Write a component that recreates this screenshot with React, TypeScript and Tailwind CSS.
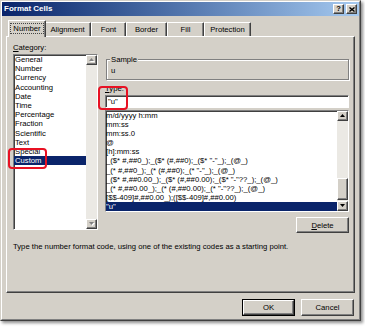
import React from "react";

const raised =
  "bg-[#d4d0c8] border border-t-white border-l-white border-r-[#404040] border-b-[#404040] shadow-[inset_-1px_-1px_0_#808080]";
const sunken =
  "border border-t-[#808080] border-l-[#808080] border-r-white border-b-white shadow-[inset_1px_1px_0_#404040]";

function Arrow({ dir, disabled }: { dir: "up" | "down"; disabled?: boolean }) {
  const pts = dir === "up" ? "2.5,0 5,3 0,3" : "0,0 5,0 2.5,3";
  const sh = dir === "up" ? "3.5,1 6,4 1,4" : "1,1 6,1 3.5,4";
  return (
    <svg width="6" height="4" viewBox="0 0 6 4">
      {disabled && <polygon points={sh} fill="#ffffff" />}
      <polygon points={pts} fill={disabled ? "#808080" : "#000000"} />
    </svg>
  );
}

function ScrollBtn({ dir, disabled }: { dir: "up" | "down"; disabled?: boolean }) {
  return (
    <div className={`${raised} h-[10px] flex items-center justify-center`}>
      <Arrow dir={dir} disabled={disabled} />
    </div>
  );
}

const cats = [
  "General",
  "Number",
  "Currency",
  "Accounting",
  "Date",
  "Time",
  "Percentage",
  "Fraction",
  "Scientific",
  "Text",
  "Special",
  "Custom",
];

const codes = [
  "m/d/yyyy h:mm",
  "mm:ss",
  "mm:ss.0",
  "@",
  "[h]:mm:ss",
  '_($* #,##0_);_($* (#,##0);_($* "-"_);_(@_)',
  '_(* #,##0_);_(* (#,##0);_(* "-"_);_(@_)',
  '_($* #,##0.00_);_($* (#,##0.00);_($* "-"??_);_(@_)',
  '_(* #,##0.00_);_(* (#,##0.00);_(* "-"??_);_(@_)',
  "[$$-409]#,##0.00_);([$$-409]#,##0.00)",
  '"u"',
];

const tabs = [
  { label: "Alignment", w: "w-[47px]" },
  { label: "Font", w: "w-[35px]" },
  { label: "Border", w: "w-[41px]" },
  { label: "Fill", w: "w-[37px]" },
  { label: "Protection", w: "w-[47px]" },
];

export default function App() {
  return (
    <div className="relative w-[365px] h-[327px] bg-white overflow-hidden font-['Liberation_Sans',Arial,sans-serif] text-[7.7px] text-black">
      {/* window */}
      <div className="w-[361px] h-[321px] border border-t-[#d4d0c8] border-l-[#d4d0c8] border-r-[#404040] border-b-[#404040] shadow-[2px_2px_3px_rgba(0,0,0,0.45)]">
        <div className="h-full border border-t-white border-l-white border-r-[#808080] border-b-[#808080] bg-[#d4d0c8] flex flex-col">
          {/* title bar */}
          <div className="h-[14px] shrink-0 flex items-center justify-between pl-[2px] pr-[2px] bg-gradient-to-r from-[#0a246a] to-[#a6caf0]">
            <span className="text-white font-bold text-[8px] leading-[10px]">Format Cells</span>
            <div className="flex gap-[2px]">
              <div className={`${raised} w-[11px] h-[10px] flex items-center justify-center font-bold text-[7.5px] leading-[8px]`}>
                ?
              </div>
              <div className={`${raised} w-[11px] h-[10px] flex items-center justify-center`}>
                <svg width="6" height="5" viewBox="0 0 6 5">
                  <path d="M0.5 0.5 L5.5 4.5 M5.5 0.5 L0.5 4.5" stroke="#000" strokeWidth="1.4" />
                </svg>
              </div>
            </div>
          </div>

          {/* body */}
          <div className="flex-1 flex flex-col pl-[4px] pr-[4px] mt-[4px]">
            {/* tabs */}
            <div className="h-[16px] flex items-end pl-[4px]">
              <div className="relative z-10 -ml-[2px] -mr-[2px] -mb-px w-[38px] h-[17px] bg-[#d4d0c8] border-t border-l border-t-white border-l-white border-r border-r-[#404040] shadow-[inset_-1px_0_0_#808080] rounded-t-[1px] flex items-start justify-center pt-[2px]">
                <span className="border border-dotted border-[#444] px-[2px] leading-[9px]">Number</span>
              </div>
              {tabs.map((t) => (
                <div
                  key={t.label}
                  className={`${t.w} h-[14px] bg-[#d4d0c8] border-t border-l border-t-white border-l-white border-r border-r-[#404040] shadow-[inset_-1px_0_0_#808080] rounded-t-[1px] flex items-start justify-center pt-[2px] leading-[9px]`}
                >
                  {t.label}
                </div>
              ))}
            </div>

            {/* panel */}
            <div className="h-[257px] shrink-0 border border-t-white border-l-white border-r-[#404040] border-b-[#404040] shadow-[inset_-1px_-1px_0_#808080] pt-[6px] pl-[6px] pr-[5px] flex flex-col">
              <div className="flex gap-[7px] items-start">
                {/* left column */}
                <div className="w-[85px] flex flex-col">
                  <div className="h-[9px] leading-[9px]">
                    <span className="underline">C</span>ategory:
                  </div>
                  <div className={`${sunken} mt-[2px] h-[176px] bg-white flex overflow-hidden`}>
                    <div className="flex-1 flex flex-col min-w-0">
                      {cats.map((c) => (
                        <div
                          key={c}
                          className={
                            c === "Custom"
                              ? "h-[9.2px] leading-[9.2px] pl-[1px] bg-[#0a246a] text-white whitespace-nowrap"
                              : "h-[9.2px] leading-[9.2px] pl-[1px] whitespace-nowrap"
                          }
                        >
                          {c}
                        </div>
                      ))}
                    </div>
                    <div className="w-[11px] flex flex-col bg-[#ebe9e4]">
                      <ScrollBtn dir="up" disabled />
                      <div className="flex-1" />
                      <ScrollBtn dir="down" disabled />
                    </div>
                  </div>
                </div>

                {/* right column */}
                <div className="flex-1 flex flex-col">
                  <div className="relative ml-[1px] mt-[16px] h-[21px] border border-[#808080] shadow-[inset_1px_1px_0_#fff,1px_1px_0_#fff]">
                    <span className="absolute left-[3px] top-[-5px] px-[1px] bg-[#d4d0c8] leading-[9px]">Sample</span>
                    <div className="pl-[4px] pt-[6px] leading-[9px]">u</div>
                  </div>
                  <div className="mt-[4px] h-[9px] leading-[9px]">
                    <span className="underline">T</span>ype:
                  </div>
                  <div className={`${sunken} mt-[2px] h-[13px] bg-white flex items-center pl-[2px] leading-[9px]`}>
                    "u"
                  </div>
                  <div className={`${sunken} mt-[2px] h-[102px] bg-white flex overflow-hidden`}>
                    <div className="flex-1 flex flex-col min-w-0">
                      {codes.map((c, i) => (
                        <div
                          key={i}
                          className={
                            i === codes.length - 1
                              ? "h-[9.1px] shrink-0 leading-[9.1px] bg-[#0a246a] text-white whitespace-nowrap overflow-hidden"
                              : "h-[9.1px] shrink-0 leading-[9.1px] whitespace-nowrap overflow-hidden"
                          }
                        >
                          {c}
                        </div>
                      ))}
                    </div>
                    <div className="w-[11px] flex flex-col bg-[#ebe9e4]">
                      <ScrollBtn dir="up" />
                      <div className="flex-1" />
                      <div className={`${raised} h-[22px]`} />
                      <div className="h-px" />
                      <ScrollBtn dir="down" />
                    </div>
                  </div>
                  <div className={`${raised} self-end mt-[5px] w-[53px] h-[16px] flex items-center justify-center leading-[9px]`}>
                    <span>
                      <span className="underline">D</span>elete
                    </span>
                  </div>
                </div>
              </div>
              <div className="mt-[9px] h-[9px] leading-[9px] whitespace-nowrap">
                Type the number format code, using one of the existing codes as a starting point.
              </div>
            </div>

            {/* buttons */}
            <div className="mt-[6px] flex justify-end gap-[6px] pr-[1px]">
              <div className="w-[53px] h-[17px] border border-black">
                <div className={`${raised} h-full flex items-center justify-center leading-[9px]`}>OK</div>
              </div>
              <div className={`${raised} w-[53px] h-[17px] flex items-center justify-center leading-[9px]`}>Cancel</div>
            </div>
          </div>
        </div>
      </div>

      {/* red annotation marks */}
      <div className="absolute left-[98px] top-[86px] w-[30px] h-[24px] border-2 border-[#e81123] rounded-[4px]" />
      <div className="absolute left-[8px] top-[148px] w-[39px] h-[21px] border-2 border-[#e81123] rounded-[4px]" />
    </div>
  );
}
